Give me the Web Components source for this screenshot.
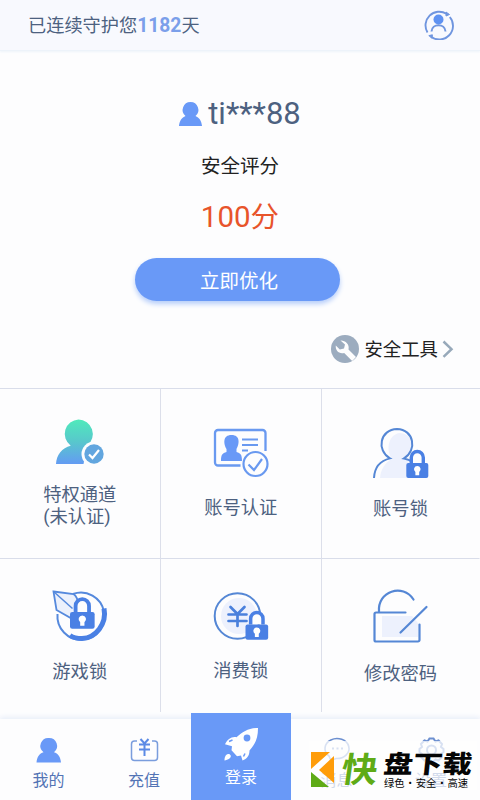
<!DOCTYPE html>
<html lang="zh-CN">
<head>
<meta charset="utf-8">
<title>账号安全</title>
<style>
body{margin:0;width:480px;height:800px;overflow:hidden;background:#fdfdfe;font-family:Roboto,"Noto Sans CJK SC",sans-serif;color:#4d6180}
</style>
</head>
<body>
<safe-app></safe-app>
<script>
const define=(name,html)=>{
  const t=document.createElement('template');
  t.innerHTML=html;
  customElements.define(name,class extends HTMLElement{
    constructor(){super();this.attachShadow({mode:'open'}).append(t.content.cloneNode(true));}
  });
};

/* Shared padlock, 22 x 28, drawn at a given origin */
const lock=(x,y,s=1)=>`<g transform="translate(${x} ${y}) scale(${s})"><path d="M5 13V7.5a6 6 0 0 1 12 0V13" fill="#fdfdfe" stroke="#4a80e4" stroke-width="3.4"/><rect x="0" y="13" width="22" height="15" rx="2" fill="#4a80e4" stroke="none"/><path d="M11 16a3.3 3.3 0 0 1 1.9 6v3.3h-3.8V22A3.3 3.3 0 0 1 11 16z" fill="#fff" stroke="none"/></g>`;

define('app-header',`<style>
:host{display:flex;align-items:center;justify-content:space-between;height:51px;box-sizing:border-box;padding:0 26px 0 28px;background:#f8f9fe;border-bottom:1px solid #edf3fa;font-size:18.2px;line-height:24px;box-shadow:0 1px 2px #eef4fa}
p{margin:2px 0 0}b{color:#7b9fea;font-weight:700;font-size:19.300px}svg{display:block}
</style><p>已连续守护您<b>1182</b>天</p>
<svg width="30" height="30" viewBox="424 10 30 30" fill="none" stroke="#6f95df" stroke-width="1.900"><path d="M427.500 32.500A13.700 13.700 0 0 1 446.500 13.800M449.800 17A13.700 13.700 0 0 1 431 36.700"/><path d="M446 12l3.500 2.500-3.500 1.500zM432 38.200l-3.200-2.600 3.600-.8z" fill="#6f95df" stroke-width="1"/><circle cx="438.500" cy="19.500" r="5" fill="#5f92f2" stroke="none"/><path d="M431.500 31.500c.5-8.500 13.500-8.500 14 0" stroke-width="2"/></svg>`);

define('score-panel',`<style>
:host{display:flex;flex-direction:column;align-items:center;height:337px;box-sizing:border-box;padding-top:43px}
.user{display:flex;align-items:center;gap:5px;height:40px;margin-right:1px;font-size:31px;line-height:40px}
.user svg{margin-top:-1px}
.label{margin-top:19px;font-size:19.5px;line-height:28px;color:#222}
.score{margin-top:18px;font-size:29.500px;line-height:36px;color:#e8542b}
.score span{font-size:28.500px}
button{margin:22px 5px 0 0;width:205px;height:43px;border:0;border-radius:22px;background:#6999f7;color:#fff;font:19.500px/43px Roboto,"Noto Sans CJK SC",sans-serif;padding:2px 0 0 3px;box-shadow:0 3px 5px #b5cdfa}
.tools{align-self:flex-end;display:flex;align-items:center;margin:31px 26px 0 0;height:34px;font-size:18.400px;line-height:28px;color:#222}
.tools span{margin:2px 4px 0 5px}
</style>
<div class="user"><svg width="25" height="25" viewBox="0 0 26 26"><path d="M13 1a8.200 8.200 0 0 1 5.200 14.500C22 17 24.500 20.500 25 26H1c.5-5.500 3-9 6.800-10.500A8.200 8.200 0 0 1 13 1z" fill="#6999f7"/></svg><span>ti***88</span></div>
<div class="label">安全评分</div><div class="score">100<span>分</span></div><button>立即优化</button>
<div class="tools"><svg width="28" height="28" viewBox="0 0 28 28"><circle cx="14" cy="14" r="14" fill="#9cacbf"/><path d="M9.500 5.500l4.500 4-1 4-4.200 1-4-4c-.7 5 3.500 8.900 8.400 7.400l8 8 3.800-3.800-7.500-7.500c1.300-5-3-9.300-8-9.100z" fill="#fdfdfe"/></svg><span>安全工具</span><svg width="12" height="20" viewBox="0 0 12 20" fill="none" stroke="#97a9ba" stroke-width="2.500"><path d="M1.500 2.500l8 7.700-8 7.700"/></svg></div>`);

define('tool-tile',`<style>
:host{display:flex;flex-direction:column;align-items:center;gap:var(--gap,15px);padding-top:var(--top,32px);box-sizing:border-box;font-size:18.300px;line-height:22px;border-right:1px solid #dcdfea;border-bottom:1px solid #d9ddea}
:host(.last){border-right-color:transparent}
:host(.low){border-bottom:0}
::slotted(svg){display:block;width:60px;height:60px}
</style><slot name="icon"></slot><div><slot></slot></div>`);

define('tool-grid',`<style>
:host{display:grid;grid-template-columns:160.500px 161.500px 158px;grid-template-rows:170px 153px;border-top:1px solid #d9ddea}
</style>
<tool-tile style="--top:26px;--gap:9px"><svg slot="icon" viewBox="50 415 60 60"><defs><linearGradient id="g" x1="0" y1="0" x2="0" y2="1"><stop offset="0" stop-color="#50eabb"/><stop offset=".5" stop-color="#58c7cc"/><stop offset="1" stop-color="#639bf3"/></linearGradient></defs><path d="M78.500 419.500a14.500 14.500 0 0 1 9 25.700l-4 18.800H56c.5-9.500 6-16 14.700-18.300a14.500 14.500 0 0 1 7.800-26.200z" fill="url(#g)"/><circle cx="94" cy="454" r="12.500" fill="#fdfdfe"/><circle cx="94" cy="454" r="9.700" fill="#62a6df"/><path d="M89 454.500l3.500 3.500 6.500-8" fill="none" stroke="#fff" stroke-width="2.200"/></svg>特权通道<br>(未认证)</tool-tile>
<tool-tile style="--top:32px;--gap:16px"><svg slot="icon" viewBox="211 421 60 60" fill="none" stroke="#6999f0"><path d="M240.500 465.500H218a3 3 0 0 1-3-3V433a3 3 0 0 1 3-3h44.500a3 3 0 0 1 3 3v18" stroke-width="2.300"/><path d="M231.500 435c9 0 8 9 5 14v3c4 1.200 5.500 2.500 5.500 9h-21c0-6.500 1.500-7.800 5.500-9v-3c-3-5-4-14 5-14z" fill="#6999f7" stroke="none"/><path d="M242 439.500h16M242 445h16M242 450.500h6" stroke-width="1.800"/><circle cx="255.500" cy="464" r="12" fill="#fdfdfe" stroke-width="2.200"/><path d="M248.500 464.500l5.500 5.500 8-11" stroke-width="2.200"/></svg>账号认证</tool-tile>
<tool-tile class="last" style="--top:32px;--gap:17px"><svg slot="icon" viewBox="371 421 60 60"><path d="M400 433c9 1 12 6 12 13 0 6-4 10-7 13 8 2 12 8 13 19h-38c1-10 6-16 12-19-7-10-3-25 8-26z" fill="#edf1fd"/><path d="M374 478c.5-10 5-17 16-19.600C376 450 380 429.500 397 429c17 .5 20.500 21 7 29.400 3 .5 6 1.600 8.500 3.600" fill="none" stroke="#5587d5" stroke-width="2"/>${lock(406.300,450)}</svg>账号锁</tool-tile>
<tool-tile class="low" style="--top:26px;--gap:16px"><svg slot="icon" viewBox="50 585 60 60" fill="none" stroke="#5589dd"><path d="M73 594a23.500 23.500 0 1 1-15.500 20" stroke-width="2"/><path d="M104 608.500c3 15-8 29.500-22 30-5 0-9-1-12-3" stroke-width="5" stroke="#4a80e4"/><path d="M53.500 591.500l20 2.500c6 4 6 17-1 25l-16-9z" fill="#ecf1fc" stroke-width="1.800"/><path d="M53.500 591.500l19 17" stroke-width="1.500"/>${lock(70,597.500,1.12)}</svg>游戏锁</tool-tile>
<tool-tile class="low" style="--top:26px;--gap:15px"><svg slot="icon" viewBox="211 585 60 60"><circle cx="239" cy="616" r="18" fill="#edf1fd"/><circle cx="237.500" cy="616" r="22.800" fill="none" stroke="#5587d5" stroke-width="2"/><path d="M230.500 607l7 7 7-7M228.500 614.500h18M228.500 621h18M237.500 614v12" fill="none" stroke="#4a80dc" stroke-width="2.700" stroke-linecap="round"/>${lock(245.500,611,1.03)}</svg>消费锁</tool-tile>
<tool-tile class="last low" style="--top:26px;--gap:18px"><svg slot="icon" viewBox="371 585 60 60" fill="none" stroke="#5587d5" stroke-width="2.200" stroke-linecap="round"><path d="M382 616h30l6 7v14h-36z" fill="#edf1fd" stroke="none"/><path d="M405.500 612.500H376a1.500 1.500 0 0 0-1.500 1.500v26a1.500 1.500 0 0 0 1.500 1.500h42a1.500 1.500 0 0 0 1.500-1.500v-15.500M379 612c-2-21 24-29 34.500-12.500M400.500 632.500L426.500 607"/></svg>修改密码</tool-tile>`);

define('tab-item',`<style>
:host{display:flex;flex-direction:column;align-items:center;box-sizing:border-box;padding-top:17px;font-size:16px;line-height:24px;color:#5374b5}
:host(.active){background:#6999f7;color:#fff;margin-top:-6px;padding-top:11px}
::slotted(svg){display:block;width:36px;height:28px;margin-bottom:5px}
:host(.active) ::slotted(svg){height:40px;margin-bottom:2px}
</style><slot name="icon"></slot><span><slot></slot></span>`);

define('tab-bar',`<style>
:host{display:grid;grid-template-columns:97px 94px 100px 91px 98px;height:81px;margin-top:7px;background:#fdfdfe;box-shadow:0 -2px 5px #e8eef9}
</style>
<tab-item><svg slot="icon" viewBox="31 735 36 28"><path d="M49 737a8 8 0 0 1 5 14.300c4 1.300 6.500 4.500 7 10.200H36.500c.5-5.700 3-8.900 7-10.200A8 8 0 0 1 49 737z" fill="#6999f7"/></svg>我的</tab-item>
<tab-item><svg slot="icon" viewBox="126 735 36 28" fill="none" stroke="#7a9ddd" stroke-width="1.500"><path d="M137 740h-2.500a3 3 0 0 0-3 3v13.500a3 3 0 0 0 3 3h20a3 3 0 0 0 3-3V743a3 3 0 0 0-3-3H152"/><path d="M140.500 738l4 4.500 4-4.500M139 743.500h11M139 748.500h11M144.500 743v12" stroke="#5b8ae5" stroke-width="2"/></svg>充值</tab-item>
<tab-item class="active"><svg slot="icon" viewBox="223 724 36 40" fill="#fff"><path d="M258 728c0 10-2.500 16-8.500 22.500 0 5-2.500 8.500-7 10l-1.500-5-4 .8-5.500-6 .5-4-7-2c2.500-5 6.500-8 11.500-7C242.500 732 248.500 728 258 728z"/><path d="M224.500 760.500c0-4.500 2-6.500 4-6.500s3.500 2.500 1 4.500c-1.500 1.200-3.500 1.500-5 2z"/><circle cx="247" cy="738" r="3.400" fill="#6999f7"/><path d="M229 741.500l3.500-1.500M243.500 756.500l1.500-3" stroke="#6999f7" stroke-width="1.500"/></svg>登录</tab-item>
<tab-item><svg slot="icon" viewBox="318 735 36 28" fill="none" stroke="#6c8fd0" stroke-width="1.600"><path d="M328 755a12 10 0 1 1 7 2.500l-5 2z"/><path d="M331 747.500h2M335.500 747.500h2M340 747.500h2" stroke-width="2"/></svg>消息</tab-item>
<tab-item><svg slot="icon" viewBox="415 735 36 28" fill="none" stroke="#6c8fd0" stroke-width="2"><circle cx="433.500" cy="749" r="4.500"/><path d="M423 743l3.500-3.500 3 1 2-3h4l2 3 3-1 3.500 3.500-1 3 2.500 2v3l-2.500 2 1 3-3.500 3.500-3-1-2 2h-4l-2-2-3 1-3.500-3.500 1-3-2.500-2v-3l2.500-2z"/></svg>设置</tab-item>`);

define('site-mark',`<style>
:host{position:absolute;left:309px;top:741px;width:168px;height:49px;display:flex;background:rgba(253,253,254,.74);color:#050505;font-family:"Noto Sans CJK SC",sans-serif}
svg{margin:11px 0 0 2px;flex:none}
.k{margin:6px 0 0 8px;font-size:36px;line-height:40px;font-weight:700;color:#5fab16;transform:skewX(-8deg) scaleY(.96)}
.t{display:flex;flex-direction:column;margin:7px 0 0 6px;white-space:nowrap}
.b{font-size:29.500px;line-height:28px;font-weight:900;transform:skewX(-6deg) scaleY(.84)}
.s{font-size:10.300px;line-height:13px;font-weight:400;display:flex;justify-content:space-between;width:84px}
</style>
<svg width="23" height="35" viewBox="0 0 23 35"><path d="M0 0h19L0 17zM23 4v27L8 18z" fill="#ff9d0a"/><path d="M0 20l18 15H0z" fill="#5fab16"/></svg>
<div class="k">快</div><div class="t"><div class="b">盘下载</div><div class="s"><span>绿色</span><span>·</span><span>安全</span><span>·</span><span>高速</span></div></div>`);

define('safe-app',`<style>:host{display:block;position:relative;width:480px;height:800px;overflow:hidden}</style>
<app-header></app-header><score-panel></score-panel><tool-grid></tool-grid><tab-bar></tab-bar><site-mark></site-mark>`);
</script>
</body>
</html>
